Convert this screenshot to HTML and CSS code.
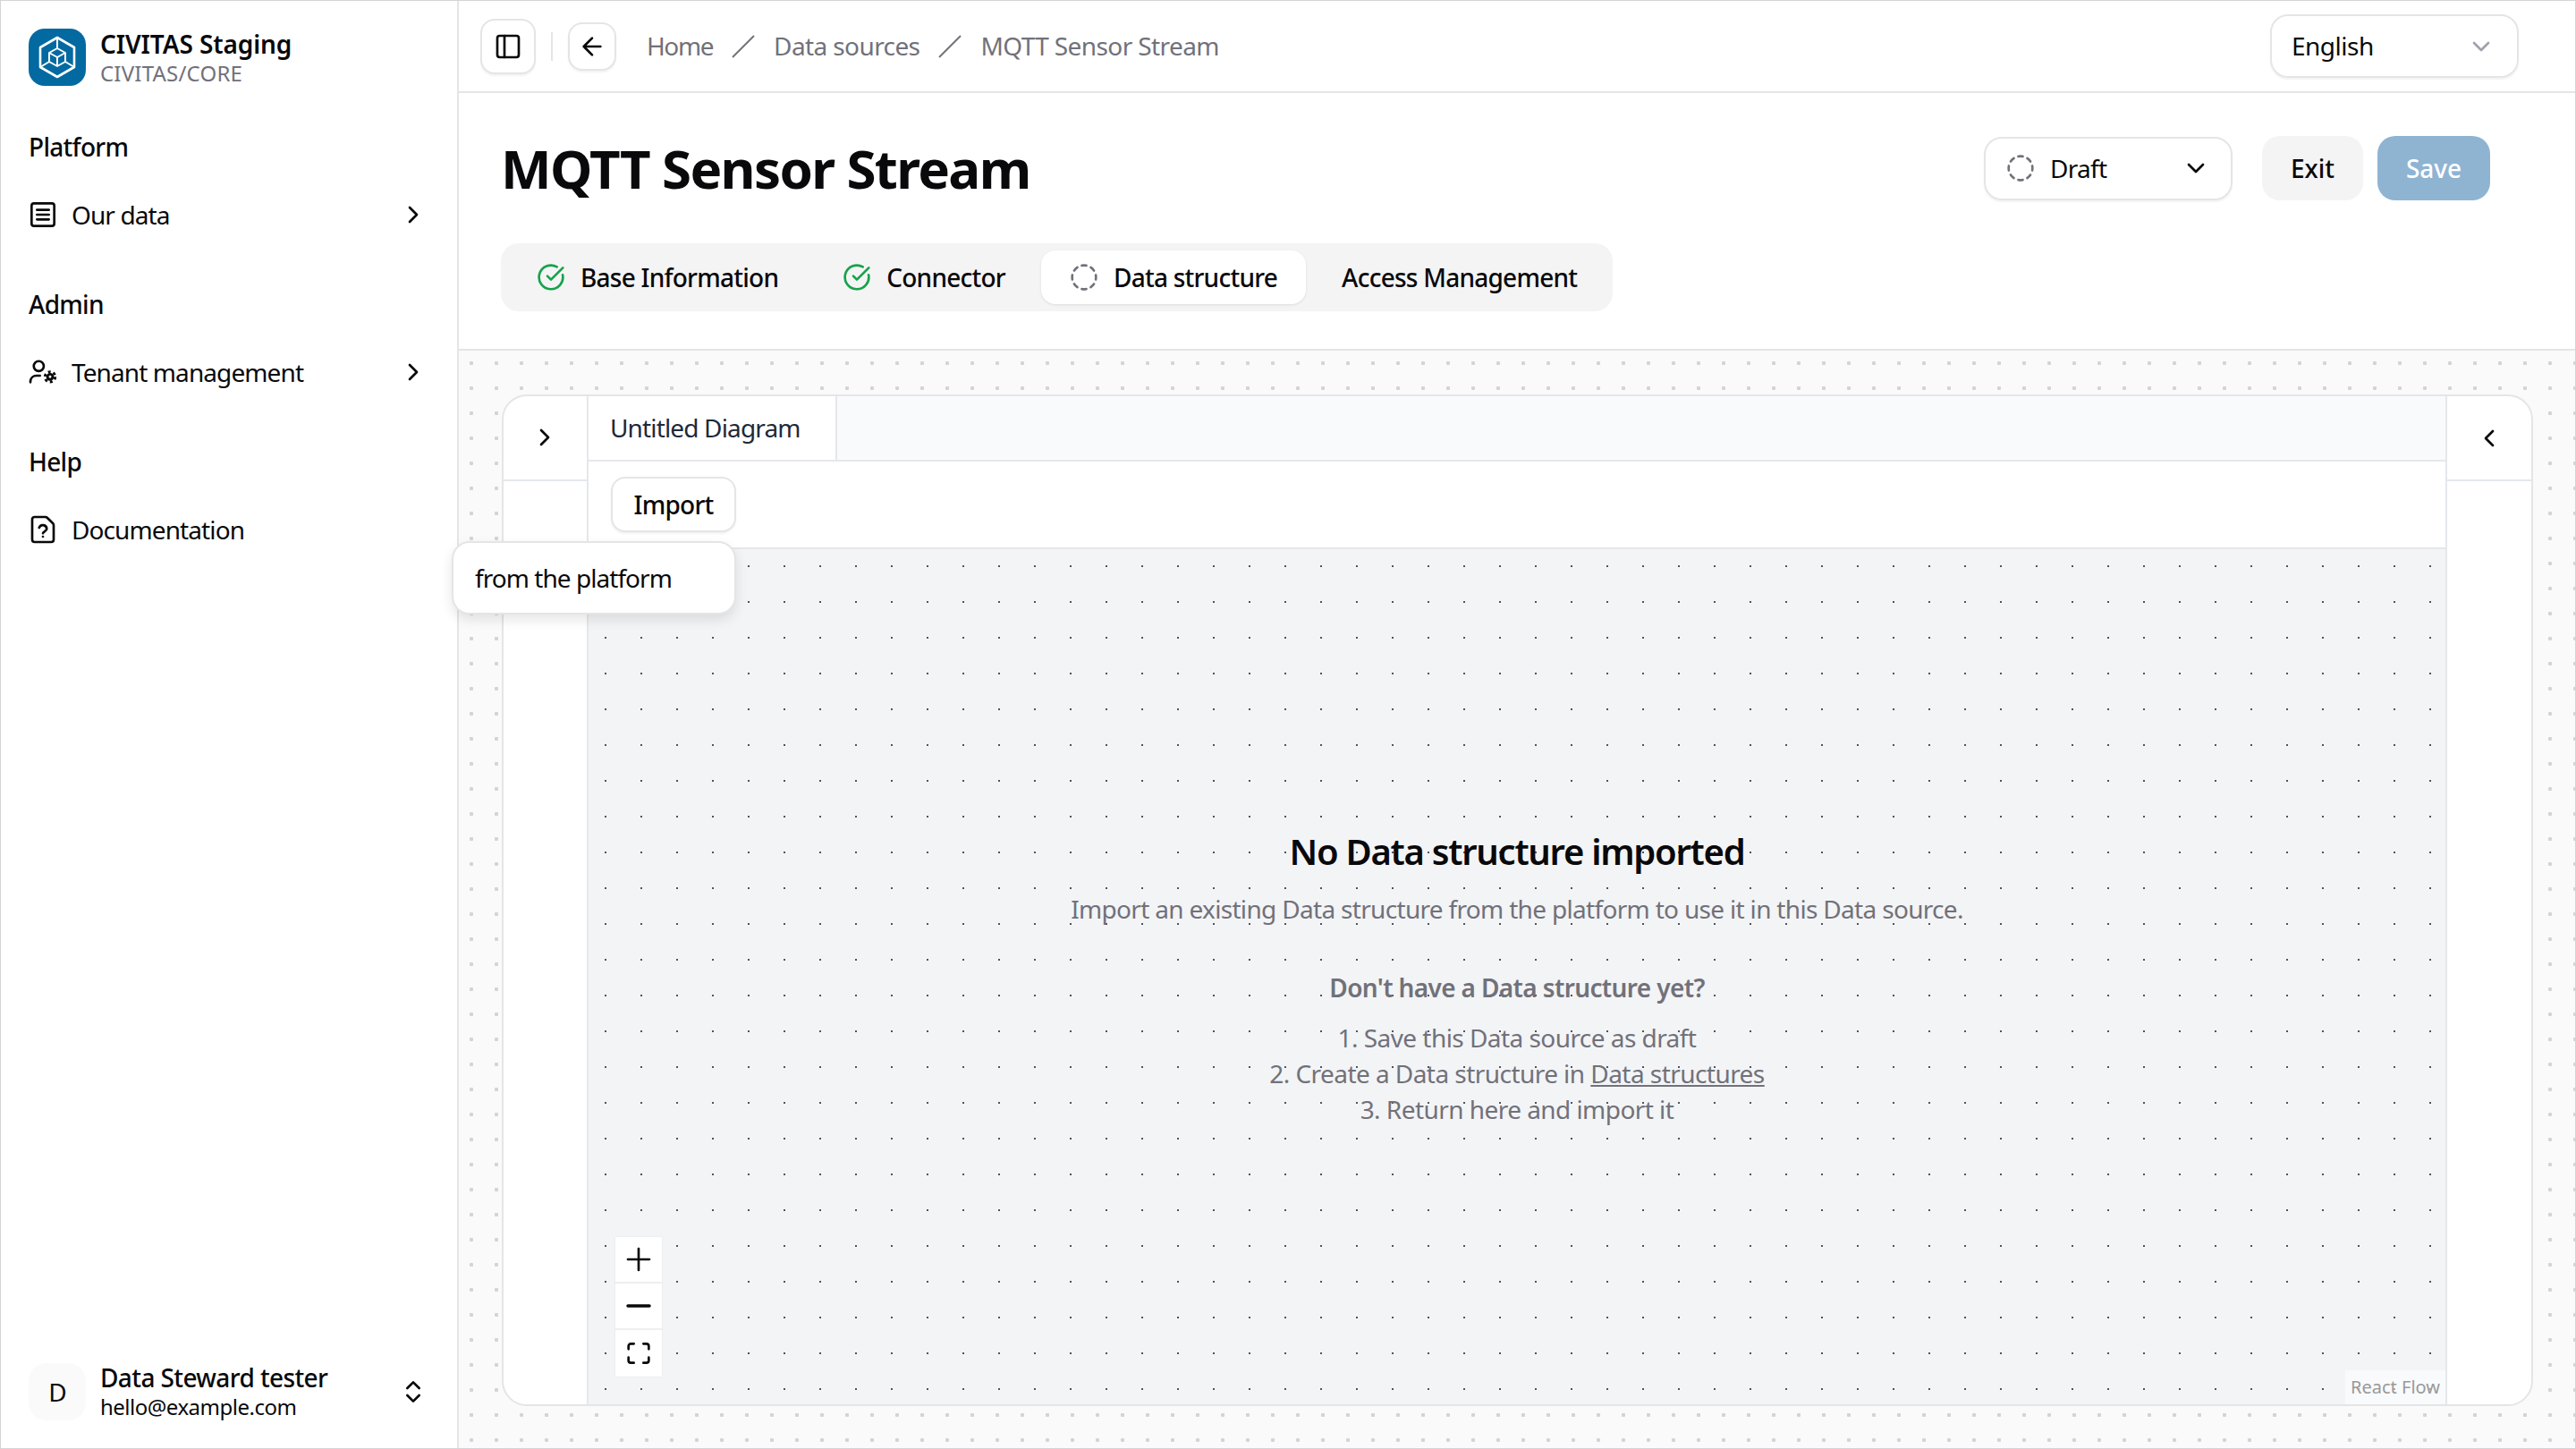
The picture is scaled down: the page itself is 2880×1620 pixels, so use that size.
FILE: index.html
```html
<!DOCTYPE html>
<html lang="en">
<head>
  <meta charset="UTF-8" />
  <title>MQTT Sensor Stream</title>
  <link rel="stylesheet" href="styles.css">
</head>
<body>
  <div class="app">
    <aside class="sidebar">
      <div class="brand">
        <div class="brand-logo">
          <svg viewBox="0 0 64 64" width="64" height="64" fill="none" stroke="#fff" stroke-width="2" stroke-linejoin="round">
            <path stroke-width="2.6" d="M32 10 51 21V43L32 54 13 43V21Z"/>
            <path d="M32 22 41 27V37L32 42 23 37V27Z"/>
            <path d="M23 27 32 32 41 27M32 32V42M32 10V22M13 43 23 37M51 43 41 37"/>
          </svg>
        </div>
        <div class="brand-text">
          <span class="brand-name">CIVITAS Staging</span>
          <span class="brand-sub">CIVITAS/CORE</span>
        </div>
      </div>

      <div class="nav-group">
        <div class="nav-label">Platform</div>
        <a class="nav-item">
          <svg class="icon" viewBox="0 0 24 24"><rect x="2.5" y="2.5" width="19" height="19" rx="2"/><path d="M7 8h10M7 12h10M7 16h10"/></svg>
          <span>Our data</span>
          <svg class="icon chev" viewBox="0 0 24 24"><path d="m9 18 6-6-6-6"/></svg>
        </a>
      </div>

      <div class="nav-group">
        <div class="nav-label">Admin</div>
        <a class="nav-item">
          <svg class="icon" viewBox="0 0 24 24"><circle cx="8.5" cy="7" r="4.2"/><path d="M1.5 20.5v-1a5 5 0 0 1 5-4.5h3"/><circle cx="18" cy="16" r="2.2" stroke-width="2.2"/><circle cx="18" cy="16" r="4.3" stroke-width="2.2" stroke-dasharray="2.25 2.25" stroke-linecap="butt"/></svg>
          <span>Tenant management</span>
          <svg class="icon chev" viewBox="0 0 24 24"><path d="m9 18 6-6-6-6"/></svg>
        </a>
      </div>

      <div class="nav-group">
        <div class="nav-label">Help</div>
        <a class="nav-item">
          <svg class="icon" viewBox="0 0 24 24"><path d="M5 22.5a2 2 0 0 1-2-2v-17a2 2 0 0 1 2-2h9a2.4 2.4 0 0 1 1.7.7l4.6 4.6a2.4 2.4 0 0 1 .7 1.7V20.5a2 2 0 0 1-2 2z"/><path d="M12 18h.01M8.8 10.5a3.3 3.3 0 0 1 6.4 1c0 2-3.2 2.4-3.2 3.6"/></svg>
          <span>Documentation</span>
        </a>
      </div>

      <div class="user">
        <div class="avatar">D</div>
        <div class="user-text">
          <span class="user-name">Data Steward tester</span>
          <span class="user-mail">hello@example.com</span>
        </div>
        <svg class="icon updown" viewBox="0 0 24 24"><path d="m7 15 5 5 5-5M7 9l5-5 5 5"/></svg>
      </div>
    </aside>

    <main class="main">
      <header class="topbar">
        <button class="square-btn toggle-btn">
          <svg class="icon" viewBox="0 0 24 24"><rect x="3" y="3" width="18" height="18" rx="2"/><path d="M9 3v18"/></svg>
        </button>
        <span class="topbar-sep"></span>
        <button class="square-btn back-btn">
          <svg class="icon" viewBox="0 0 24 24"><path d="m12 19-7-7 7-7M19 12H5"/></svg>
        </button>
        <nav class="crumbs">
          <span class="crumb-home">Home</span>
          <svg class="crumb-sep" viewBox="0 0 26 26"><path d="M1 25 25 1"/></svg>
          <span>Data sources</span>
          <svg class="crumb-sep" viewBox="0 0 26 26"><path d="M1 25 25 1"/></svg>
          <span>MQTT Sensor Stream</span>
        </nav>
        <div class="select lang-select">
          <span>English</span>
          <svg class="icon" viewBox="0 0 24 24"><path d="m6 9 6 6 6-6"/></svg>
        </div>
      </header>

      <section class="page-head">
        <div class="title-row">
          <h1>MQTT Sensor Stream</h1>
          <div class="select status-select">
            <svg class="icon dashed" viewBox="0 0 24 24"><use href="#circle-dashed"/></svg>
            <span class="status-text">Draft</span>
            <svg class="icon" viewBox="0 0 24 24"><path d="m6 9 6 6 6-6"/></svg>
          </div>
          <button class="btn btn-exit">Exit</button>
          <button class="btn btn-save">Save</button>
        </div>
        <div class="tabs">
          <div class="tab"><svg class="icon ok" viewBox="0 0 24 24"><use href="#circle-check"/></svg>Base Information</div>
          <div class="tab"><svg class="icon ok" viewBox="0 0 24 24"><use href="#circle-check"/></svg>Connector</div>
          <div class="tab tab-active"><svg class="icon dashed" viewBox="0 0 24 24"><use href="#circle-dashed"/></svg>Data structure</div>
          <div class="tab">Access Management</div>
        </div>
      </section>

      <section class="canvas">
        <div class="card">
          <div class="side-pane">
            <div class="side-top side-top-left"><svg class="icon" viewBox="0 0 24 24"><path d="m9 18 6-6-6-6"/></svg></div>
          </div>
          <div class="editor">
            <div class="doc-tabs"><div class="doc-tab">Untitled Diagram</div></div>
            <div class="toolbar"><button class="import-btn">Import</button></div>
            <div class="flow">
              <div class="empty">
                <h2>No Data structure imported</h2>
                <p class="empty-sub">Import an existing Data structure from the platform to use it in this Data source.</p>
                <p class="empty-q">Don't have a Data structure yet?</p>
                <ol class="empty-steps">
                  <li>1. Save this Data source as draft</li>
                  <li>2. Create a Data structure in <u>Data structures</u></li>
                  <li>3. Return here and import it</li>
                </ol>
              </div>
              <div class="zoom-controls">
                <button><svg class="icon" viewBox="0 0 24 24"><path d="M12 3v18M3 12h18"/></svg></button>
                <button><svg class="icon thick" viewBox="0 0 24 24"><path d="M3 12h18"/></svg></button>
                <button><svg class="icon" viewBox="0 0 24 24"><path d="M8 4H5.5a2 2 0 0 0-2 2v2.5M16 4h2.5a2 2 0 0 1 2 2v2.5M8 20H5.5a2 2 0 0 1-2-2v-2.5M16 20h2.5a2 2 0 0 0 2-2v-2.5"/></svg></button>
              </div>
              <div class="attribution">React Flow</div>
            </div>
          </div>
          <div class="side-pane side-right">
            <div class="side-top"><svg class="icon" viewBox="0 0 24 24"><path d="m15 18-6-6 6-6"/></svg></div>
          </div>
        </div>
        <div class="import-menu">from the platform</div>
      </section>
    </main>
  </div>

  <svg class="defs" width="0" height="0">
    <symbol id="circle-check" viewBox="0 0 24 24">
      <path d="M21.8 10A10 10 0 1 1 17 3.3"/><path d="m9 11 3 3L22 4"/>
    </symbol>
    <symbol id="circle-dashed" viewBox="0 0 24 24">
      <path d="M10.1 2.18a10 10 0 0 1 3.8 0M13.9 21.82a10 10 0 0 1-3.8 0M17.61 3.72a10 10 0 0 1 2.69 2.7M2.18 13.9a10 10 0 0 1 0-3.8M20.28 17.61a10 10 0 0 1-2.7 2.69M21.82 10.1a10 10 0 0 1 0 3.8M3.72 6.39a10 10 0 0 1 2.7-2.69M6.39 20.28a10 10 0 0 1-2.69-2.7"/>
    </symbol>
  </svg>
</body>
</html>
```

FILE: styles.css
```css
* {
  box-sizing: border-box;
}

html, body {
  height: 100%;
  margin: 0;
  overflow: hidden;
}

body {
  font-family: "Noto Sans", sans-serif;
  font-size: 28px;
  letter-spacing: -0.7px;
  color: #09090b;
  background: #fff;
}

button {
  font: inherit;
  letter-spacing: inherit;
  color: inherit;
  background: #fff;
  padding: 0;
}

.defs {
  position: absolute;
}

.icon {
  width: 32px;
  height: 32px;
  flex: none;
  fill: none;
  stroke: currentColor;
  stroke-width: 2;
  stroke-linecap: round;
  stroke-linejoin: round;
}

.app {
  display: flex;
  height: 100%;
  border: 1px solid #d4d4d8;
}

/* Sidebar */
.sidebar {
  width: 512px;
  flex: none;
  display: flex;
  flex-direction: column;
  padding: 31px 31px 30px;
  border-right: 2px solid #e5e5e5;
}

.brand {
  display: flex;
  align-items: center;
  gap: 16px;
  height: 64px;
  margin-bottom: 4px;
}

.brand-logo {
  width: 64px;
  height: 64px;
  flex: none;
  border-radius: 18px;
  background: #0369a1;
}

.brand-logo svg {
  display: block;
}

.brand-text {
  display: flex;
  flex-direction: column;
}

.brand-name {
  font-weight: 600;
  line-height: 34px;
  letter-spacing: -0.1px;
}

.brand-sub {
  font-size: 24px;
  line-height: 31px;
  letter-spacing: 0.2px;
  color: #71717a;
}

.nav-group {
  padding-top: 44px;
}

.nav-label {
  font-weight: 500;
  line-height: 40px;
}

.nav-item {
  display: flex;
  align-items: center;
  gap: 16px;
  height: 72px;
  margin-top: 20px;
  letter-spacing: -0.9px;
}

.chev {
  margin-left: auto;
  margin-right: 2px;
}

.user {
  display: flex;
  align-items: center;
  gap: 16px;
  margin-top: auto;
}

.avatar {
  width: 64px;
  height: 64px;
  flex: none;
  display: flex;
  align-items: center;
  justify-content: center;
  border-radius: 20px;
  background: #fafafa;
}

.user-text {
  display: flex;
  flex-direction: column;
}

.user-name {
  font-weight: 500;
  line-height: 34px;
  letter-spacing: -0.6px;
}

.user-mail {
  font-size: 24px;
  line-height: 32px;
  letter-spacing: -0.5px;
}

.updown {
  margin-left: auto;
  margin-right: 2px;
}

/* Top bar */
.main {
  flex: 1;
  min-width: 0;
  display: flex;
  flex-direction: column;
}

.topbar {
  height: 103px;
  flex: none;
  display: flex;
  align-items: center;
  padding: 0 63px 0 24px;
  border-bottom: 2px solid #e5e5e5;
}

.square-btn {
  display: flex;
  align-items: center;
  justify-content: center;
  border: 2px solid #e5e5e5;
  border-radius: 16px;
  box-shadow: 0 2px 2px rgba(0, 0, 0, 0.05);
}

.toggle-btn {
  width: 62px;
  height: 62px;
}

.back-btn {
  width: 54px;
  height: 54px;
}

.topbar-sep {
  width: 2px;
  height: 32px;
  margin: 0 17px;
  background: #e5e5e5;
}

.crumbs {
  display: flex;
  align-items: center;
  gap: 21px;
  margin-left: 34px;
  padding-bottom: 2px;
  letter-spacing: -0.6px;
  color: #71717a;
}

.crumb-home {
  letter-spacing: -1.4px;
}

.crumb-sep {
  width: 26px;
  height: 26px;
  margin-top: 2px;
  fill: none;
  stroke: #71717a;
  stroke-width: 2;
}

.select {
  display: flex;
  align-items: center;
  justify-content: space-between;
  width: 278px;
  height: 71px;
  border: 2px solid #e5e5e5;
  border-radius: 20px;
  box-shadow: 0 2px 2px rgba(0, 0, 0, 0.05);
}

.lang-select {
  margin-left: auto;
  padding: 0 24px 0 22px;
  letter-spacing: -0.5px;
}

.lang-select span {
  margin-bottom: 2px;
}

.lang-select .icon {
  color: #a1a1aa;
}

/* Page head */
.page-head {
  height: 288px;
  flex: none;
  padding: 48px 0 0 47px;
  border-bottom: 2px solid #e5e5e5;
}

.title-row {
  display: flex;
  align-items: center;
  height: 72px;
  padding-right: 95px;
}

h1 {
  margin: 0 auto 0 0;
  font-size: 60px;
  font-weight: 700;
  letter-spacing: -1.65px;
}

.status-select {
  padding: 0 23px;
}

.status-text {
  margin-left: 17px;
  margin-right: auto;
  letter-spacing: -0.7px;
}

.dashed {
  color: #71717a;
}

.ok {
  color: #16a34a;
}

.btn {
  height: 72px;
  border: 0;
  border-radius: 20px;
  font-weight: 500;
  letter-spacing: 0;
}

.btn-exit {
  width: 113px;
  margin-left: 33px;
  background: #f4f4f5;
}

.btn-save {
  width: 126px;
  margin-left: 16px;
  background: #8fb4d2;
  color: #fff;
}

.tabs {
  display: inline-flex;
  align-items: center;
  gap: 8px;
  height: 76px;
  margin-top: 48px;
  padding: 8px;
  border-radius: 20px;
  background: #f4f4f5;
}

.tab {
  display: flex;
  align-items: center;
  gap: 17px;
  height: 60px;
  padding: 0 32px;
  font-weight: 500;
  letter-spacing: -0.75px;
  border-radius: 16px;
}

.tab-active {
  background: #fff;
  box-shadow: 0 1px 3px rgba(0, 0, 0, 0.1);
}

/* Canvas */
.canvas {
  flex: 1;
  min-height: 0;
  position: relative;
  display: flex;
  padding: 49px 47px 47px 48px;
  background-color: #fafafa;
  background-image: radial-gradient(circle at 14px 14px, #d4d4d8 2px, transparent 2.5px);
  background-size: 28px 28px;
}

.card {
  flex: 1;
  display: flex;
  border: 2px solid #e5e5e8;
  border-radius: 28px;
  background: #fff;
  overflow: hidden;
}

.side-pane {
  width: 93px;
  flex: none;
}

.side-right {
  width: 96px;
  border-left: 2px solid #e5e7eb;
}

.side-top {
  height: 95px;
  display: flex;
  align-items: center;
  justify-content: center;
  border-bottom: 2px solid #e5e7eb;
}

.side-top-left {
  padding: 0 2px 2px 0;
}

.editor {
  flex: 1;
  min-width: 0;
  display: flex;
  flex-direction: column;
  border-left: 2px solid #e5e7eb;
}

.doc-tabs {
  height: 73px;
  flex: none;
  display: flex;
  background: #f9fafb;
  border-bottom: 2px solid #e5e7eb;
}

.doc-tab {
  display: flex;
  align-items: center;
  width: 278px;
  height: 71px;
  padding: 0 0 2px 24px;
  letter-spacing: -0.85px;
  color: #1e293b;
  background: #fff;
  border-right: 2px solid #e5e7eb;
}

.toolbar {
  height: 98px;
  flex: none;
  padding: 17px 25px 0;
  border-bottom: 2px solid #e5e7eb;
}

.import-btn {
  width: 140px;
  height: 62px;
  font-weight: 500;
  letter-spacing: -0.75px;
  border: 2px solid #e5e5e5;
  border-radius: 16px;
  box-shadow: 0 2px 2px rgba(0, 0, 0, 0.05);
}

.flow {
  flex: 1;
  min-height: 0;
  position: relative;
  display: flex;
  align-items: center;
  justify-content: center;
  background-color: #f3f4f6;
  background-image: radial-gradient(circle at 19px 19px, #52525b 1px, transparent 1.4px);
  background-size: 40px 40px;
}

.empty {
  padding-top: 2px;
  text-align: center;
  color: #71717a;
}

h2 {
  margin: 0;
  font-size: 40px;
  font-weight: 600;
  line-height: 52px;
  letter-spacing: -1.27px;
  color: #09090b;
}

.empty-sub {
  margin: 18px 0 0;
  line-height: 40px;
  letter-spacing: -0.68px;
}

.empty-q {
  margin: 48px 0 0;
  font-weight: 600;
  line-height: 40px;
  letter-spacing: -0.63px;
}

.empty-steps {
  margin: 16px 0 0;
  padding: 0;
  list-style: none;
  line-height: 40px;
  letter-spacing: -0.55px;
}

.zoom-controls {
  position: absolute;
  left: 30px;
  bottom: 31px;
  width: 52px;
  display: flex;
  flex-direction: column;
  box-shadow: 0 0 2px rgba(0, 0, 0, 0.08);
}

.zoom-controls button {
  height: 52px;
  display: flex;
  align-items: center;
  justify-content: center;
  border: 0;
  border-bottom: 2px solid #eeeeee;
}

.zoom-controls button:last-child {
  border-bottom: 0;
}

.zoom-controls .thick {
  stroke-width: 2.6;
}

.attribution {
  position: absolute;
  right: 0;
  bottom: 0;
  height: 38px;
  padding: 0 6px;
  font-size: 20px;
  line-height: 38px;
  letter-spacing: 0;
  color: #999;
  background: rgba(255, 255, 255, 0.5);
}

/* Import dropdown */
.import-menu {
  position: absolute;
  left: -8px;
  top: 213px;
  width: 318px;
  height: 82px;
  display: flex;
  align-items: center;
  padding-left: 24px;
  letter-spacing: -0.95px;
  background: #fff;
  border: 2px solid #e5e5e5;
  border-radius: 20px;
  box-shadow: 0 6px 14px rgba(0, 0, 0, 0.1);
}
```
